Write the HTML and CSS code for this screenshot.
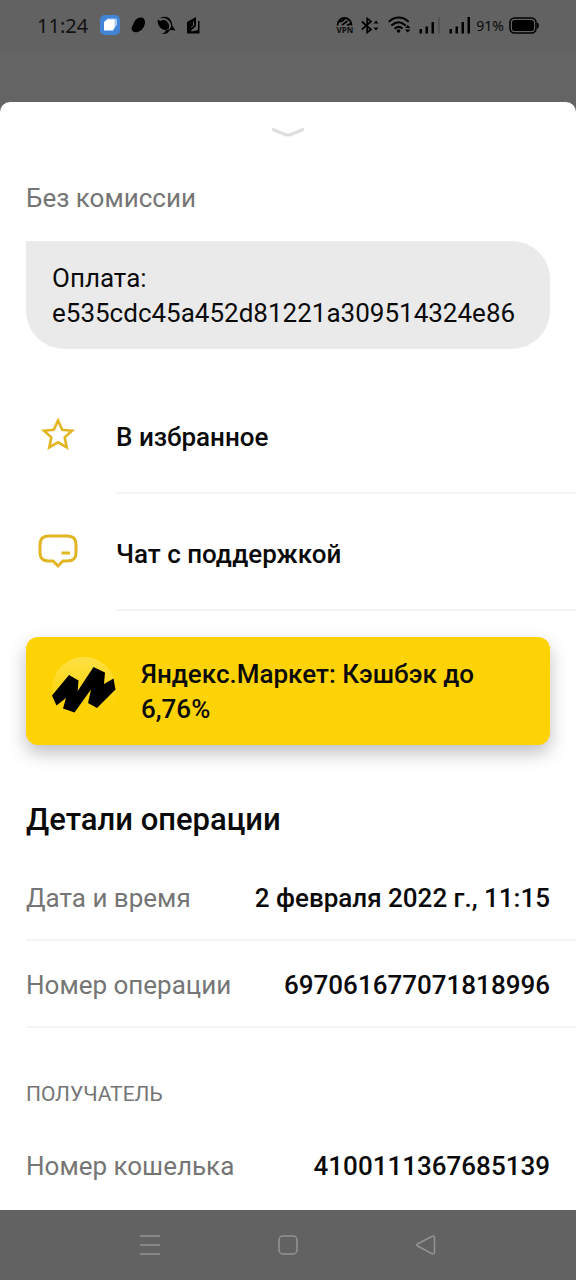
FILE: index.html
```html
<!DOCTYPE html>
<html lang="ru">
<head>
<meta charset="utf-8">
<meta name="viewport" content="width=device-width, initial-scale=1">
<title>Детали операции</title>
<link rel="stylesheet" href="styles.css">
</head>
<body>
<header class="status">
  <time class="clock">11:24</time>
  <div class="notices">
    <svg width="20" height="20" viewBox="0 0 20 20"><rect width="20" height="20" rx="5" fill="#4285d6"/><path d="M7 3.500h8.500q1.500 0 1.500 1.500v5l-3 3H7z" fill="#a9cbf6"/><path d="M4 7l3-2.500h7.500V13l-1.500 2.500H4z" fill="#fff"/></svg>
    <svg width="15" height="16" viewBox="0 0 15 16"><path d="M8 .8c3.500-1.300 6.500 1 6 5-.5 5-4 8.700-8 9.400C2 16-.5 13 1 9.500 2 8 2.500 7 3.200 5 4.200 3 6 1.500 8 .8z"/></svg>
    <svg width="19" height="19" viewBox="0 0 19 19"><path d="M.5 3.500l3 1.500C5 3.500 8 3.500 10 5.500c2.500 2.500 2.500 5 1.500 7.500l-3 1C3.500 13.500.5 9.500.5 3.500z"/><path d="M2.500 2.500C4.500.8 9-.5 12.500 2.500c2 2 2.500 5 3 7.500l3 4.500-5-.5-2 .5c1-1.500 3-3 2.500-6C13 4.500 9 .8 2.500 2.500z"/><path d="M12.500 13.500c0 3-3 5-8.500 4.500 3-.5 4-1.500 5-4z"/></svg>
    <svg width="13" height="17" viewBox="0 0 13 17"><path d="M0 5l9-5v9l-5.500 5c3 .5 5.500 0 7.500-1.500V4h1.500v12.500H0z"/><path d="M6.500 4.500v4L4 10.500" fill="none" stroke="#626262"/></svg>
  </div>
  <div class="indicators">
    <div class="vpn">
      <svg width="17" height="9" viewBox="0 0 17 9" fill="none" stroke="#000" stroke-width="1.800"><path d="M1.500 8.500C1.500 4 4.500 1 8.500 1s7 3 7 7.500M3 5l4-1.500L9 1M6 8l5.500-4M11 8.500l4-2"/></svg>
      <span>VPN</span>
    </div>
    <svg width="19" height="17" viewBox="0 0 19 17"><path d="M.8 4.500l9.200 8-3.800 3V1.500l3.800 3-9.200 8" fill="none" stroke="#000" stroke-width="1.700"/><path d="M12.500 6.500l2.500-3 2.500 3zM12.500 10.500h5l-2.500 3z"/></svg>
    <svg width="23" height="18" viewBox="0 0 23 18"><g fill="none" stroke="#000" stroke-width="2.100" stroke-linecap="round"><path d="M1.500 5.200C7 .3 14.500.3 20 5.200M4 9c4-3.500 9-3.500 13 0M7.300 12.300c2-1.700 4.500-1.700 6.500-.2"/></g><circle cx="10.500" cy="15" r="1.800"/><path d="M17 12l2.700-3 2.800 3zM17 13.500h5.500L19.700 16.500z"/></svg>
    <svg width="22" height="17" viewBox="0 0 22 17"><path d="M.5 12H3v4.500H.500zM6.500 9.500H9v7H6.500zM12.500 5H15v11.500h-2.500z"/><path d="M19 0h2v16.500h-2z" fill="#535353"/></svg>
    <svg width="22" height="17" viewBox="0 0 22 17"><path d="M.5 12H3v4.500H.500zM6.500 9.500H9v7H6.500zM12.500 5H15v11.500h-2.500zM18.500 0H21v16.500h-2.500z"/></svg>
    <span class="percent">91%</span>
    <svg width="30" height="17" viewBox="0 0 30 17"><rect x="1" y="1" width="26" height="15" rx="4.500" fill="none" stroke="#000" stroke-width="1.600"/><rect x="3" y="3" width="22" height="11" rx="2.500"/><path d="M28 5.500q2 .5 2 3t-2 3z"/></svg>
  </div>
</header>
<main class="sheet">
  <button class="collapse" aria-label="Свернуть">
    <svg width="34" height="12" viewBox="0 0 34 12" fill="none" stroke="#dedede" stroke-width="3"><path d="M1 2l13 5.500q3 1.200 6 0L33 2"/></svg>
  </button>
  <p class="commission">Без комиссии</p>
  <p class="message">Оплата: e535cdc45a452d81221a309514324e86</p>
  <div class="actions">
    <button class="action">
      <svg class="action-icon" width="64" height="40" viewBox="0 0 64 40" fill="none" stroke="#e2b522" stroke-width="2.600"><path d="M32 6.500l4.200 9.200 9.800 1-7.300 6.700 2.100 10L32 28.300l-8.800 5.100 2.100-10L18 16.700l9.800-1z"/></svg>
      <span class="action-label">В избранное</span>
    </button>
    <button class="action">
      <svg class="action-icon" width="64" height="40" viewBox="0 0 64 40" fill="none" stroke="#e2b522" stroke-width="3"><path d="M22.500 5h19q8.500 0 8.500 8.500v8Q50 30 41.500 30H37l-5 5-5-5h-4.500Q14 30 14 21.500v-8Q14 5 22.500 5zM35.500 22H44"/></svg>
      <span class="action-label">Чат с поддержкой</span>
    </button>
  </div>
  <button class="cashback">
    <svg class="cashback-logo" width="64" height="64" viewBox="0 0 64 64">
      <defs><linearGradient id="glow" x1="0" y1="0" x2="0" y2="1"><stop offset="0" stop-color="#ffe044"/><stop offset=".75" stop-color="#fed305"/></linearGradient></defs>
      <circle cx="32" cy="32" r="32" fill="url(#glow)"/>
      <path d="M0 38.500L17 18l9.500 5.500-.8 10.500L41.500 10 53 15.500l-1 11.500L61.500 21.500l2 11L45 51l-9-5 3-13.500L22.500 55.500l-11.500-4L14 41 4.500 48.500z"/>
    </svg>
    <span>Яндекс.Маркет: Кэшбэк до 6,76%</span>
  </button>
  <h1 class="title">Детали операции</h1>
  <dl class="details">
    <div class="row"><dt>Дата и время</dt><dd>2 февраля 2022 г., 11:15</dd></div>
    <div class="row"><dt>Номер операции</dt><dd>697061677071818996</dd></div>
  </dl>
  <h2 class="section">ПОЛУЧАТЕЛЬ</h2>
  <dl class="recipient">
    <div class="row row-last"><dt>Номер кошелька</dt><dd>4100111367685139</dd></div>
  </dl>
</main>
<nav class="navbar">
  <button aria-label="Меню"><svg width="22" height="22" viewBox="0 0 22 22"><path d="M1 2h20M1 11h20M1 20h20"/></svg></button>
  <button aria-label="Домой"><svg width="22" height="22" viewBox="0 0 22 22"><rect x="2" y="2" width="18" height="18" rx="4"/></svg></button>
  <button aria-label="Назад"><svg width="22" height="22" viewBox="0 0 22 22"><path d="M2.500 10L17.500 2q2 0 2 2v14q0 2-2 2L2.500 12q-1.500-1 0-2z"/></svg></button>
</nav>
</body>
</html>
```
FILE: styles.css
```css
* { box-sizing: border-box; }
body {
  margin: 0;
  min-height: 100vh;
  display: flex;
  flex-direction: column;
  background: #646464;
  color: #0a0a0a;
  font-family: Roboto, "Noto Sans", sans-serif;
  font-size: 26px;
  line-height: 35px;
}
p, h1, h2, dl, dd { margin: 0; }
svg { display: block; flex: none; }
button {
  border: 0;
  padding: 0;
  background: none;
  color: inherit;
  font: inherit;
  text-align: left;
  cursor: pointer;
}
.status {
  display: flex;
  align-items: center;
  height: 50px;
  margin-bottom: 52px;
  padding: 0 37px 0 37px;
  background: #626262;
  font-family: "Noto Sans", sans-serif;
}
.clock { font-size: 20px; color: #111; }
.notices {
  display: flex;
  align-items: center;
  gap: 11px;
  margin-left: 12px;
}
.indicators {
  display: flex;
  align-items: center;
  gap: 8px;
  margin-left: auto;
}
.vpn {
  display: flex;
  flex-direction: column;
  align-items: center;
  width: 17px;
  font: bold 8px/8px "Noto Sans", sans-serif;
}
.percent { font-size: 14px; margin: 0 -3px; }
.sheet {
  flex: 1;
  display: flex;
  flex-direction: column;
  padding-left: 26px;
  background: #fff;
  border-radius: 10px 10px 0 0;
}
.collapse {
  align-self: center;
  margin: 25px 26px 42px 0;
}
.commission { color: #757575; }
.message {
  margin: 25px 26px 0 0;
  padding: 20px 26px 18px;
  background: #eaeaea;
  border-radius: 0 38px 38px 38px;
}
.actions { margin-top: 28px; }
.action {
  display: flex;
  align-items: center;
  width: 100%;
}
.action-icon { margin-bottom: 4px; }
.action-label {
  flex: 1;
  margin-left: 26px;
  padding: 43px 0 37px;
  border-bottom: 2px solid #f5f5f5;
  font-weight: 500;
}
.cashback {
  display: flex;
  align-items: flex-start;
  gap: 25px;
  margin: 26px 26px 0 0;
  padding: 20px 26px 18px;
  background: #fed305;
  border-radius: 12px;
  box-shadow: 0 8px 18px rgba(0, 0, 0, .25);
  font-weight: 500;
}
.title {
  margin: 57px 0 17px;
  font-size: 31px;
  font-weight: 500;
}
.row {
  display: flex;
  justify-content: space-between;
  gap: 16px;
  padding: 27px 26px 23px 0;
  border-bottom: 2px solid #f5f5f5;
}
.row dt { color: #757575; }
.row dd { font-weight: 500; text-align: right; }
.row-last { border-bottom: 0; }
.section {
  margin-top: 49px;
  color: #757575;
  font-size: 21px;
  font-weight: 400;
}
.recipient { margin-top: 10px; }
.navbar {
  display: flex;
  justify-content: center;
  align-items: center;
  gap: 116px;
  height: 70px;
  background: #626262;
}
.navbar svg { fill: none; stroke: #949494; stroke-width: 1.500; }
```
